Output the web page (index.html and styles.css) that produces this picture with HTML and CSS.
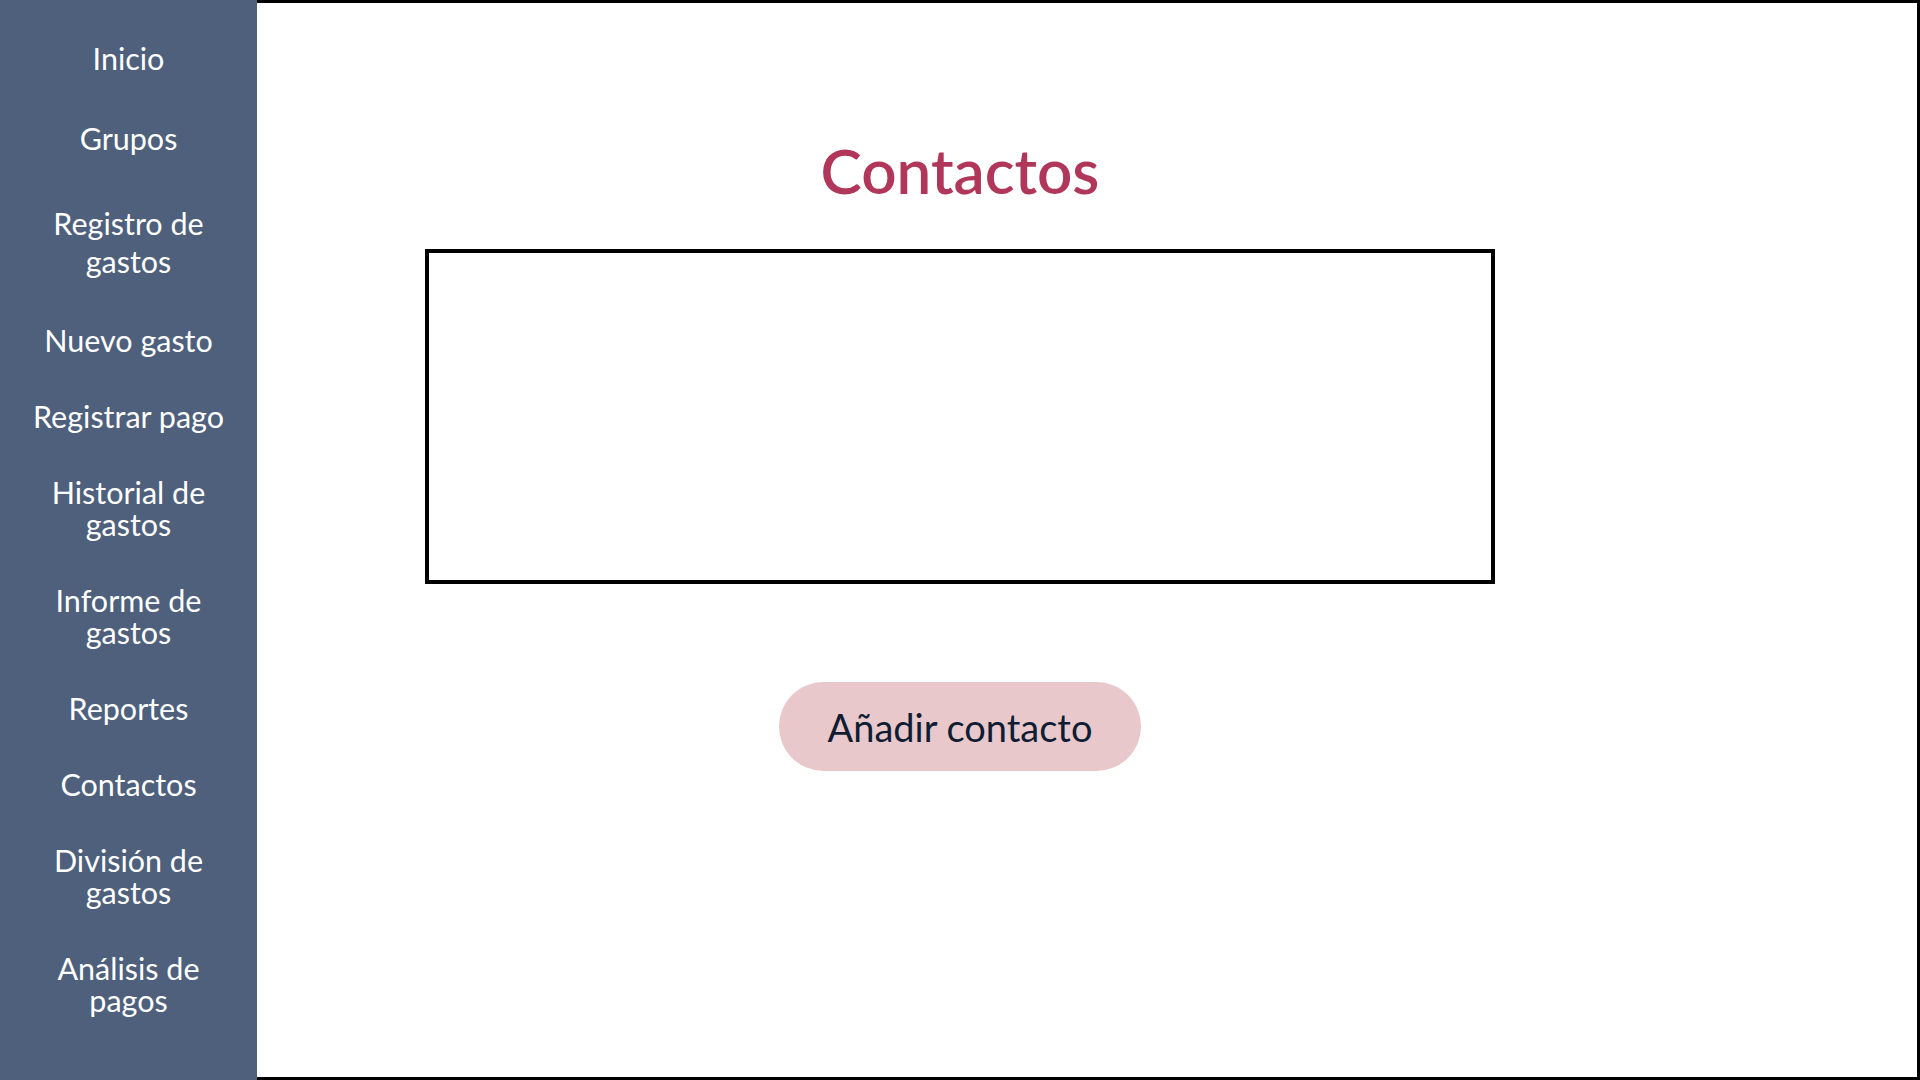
FILE: index.html
```html
<!DOCTYPE html>
<html lang="es">
<head>
    <meta charset="UTF-8">
    <meta name="viewport" content="width=device-width, initial-scale=1.0">
    <title>Contactos</title>
    <link rel="stylesheet" href="styles.css">
</head>
<body>
    <nav class="sidebar">
        <a href="#" class="nav-item">Inicio</a>
        <a href="#" class="nav-item nav-item-top">Grupos</a>
        <a href="#" class="nav-item nav-item-top nav-item-loose">Registro de gastos</a>
        <a href="#" class="nav-item">Nuevo gasto</a>
        <a href="#" class="nav-item">Registrar pago</a>
        <a href="#" class="nav-item">Historial de gastos</a>
        <a href="#" class="nav-item">Informe de gastos</a>
        <a href="#" class="nav-item">Reportes</a>
        <a href="#" class="nav-item">Contactos</a>
        <a href="#" class="nav-item">División de gastos</a>
        <a href="#" class="nav-item">Análisis de pagos</a>
    </nav>

    <main class="content">
        <h1 class="title">Contactos</h1>
        <div class="contact-list"></div>
        <button class="add-button">Añadir contacto</button>
    </main>
</body>
</html>
```

FILE: styles.css
```css
* {
    box-sizing: border-box;
}
html, body {
    margin: 0;
    height: 100%;
}
body {
    display: flex;
    font-family: Lato, "Open Sans", sans-serif;
    background-color: #ffffff;
}
.sidebar {
    width: 257px;
    flex-shrink: 0;
    background-color: #4e607c;
    display: flex;
    flex-direction: column;
    align-items: center;
    gap: 44px;
    padding: 42px 20px 0;
}
.nav-item {
    display: block;
    width: 100%;
    color: #ffffff;
    text-decoration: none;
    text-align: center;
    font-size: 30.5px;
    line-height: 32px;
}
.nav-item-top {
    margin-top: 4px;
}
.nav-item-loose {
    margin-top: 6px;
    line-height: 38px;
}
.content {
    flex: 1;
    border: 3px solid #000000;
    border-left: none;
    padding: 135px 254px 0 0;
    display: flex;
    flex-direction: column;
    align-items: center;
}
.title {
    margin: 0;
    font-size: 62px;
    line-height: 64px;
    font-weight: 600;
    color: #b0375a;
}
.contact-list {
    margin-top: 47px;
    width: 1070px;
    height: 335px;
    border: 4px solid #000000;
}
.add-button {
    margin-top: 98px;
    width: 362px;
    height: 89px;
    border: none;
    border-radius: 45px;
    background-color: #e8c8ca;
    color: #0e1d33;
    font-family: Lato, "Open Sans", sans-serif;
    font-size: 38px;
    cursor: pointer;
}
```
